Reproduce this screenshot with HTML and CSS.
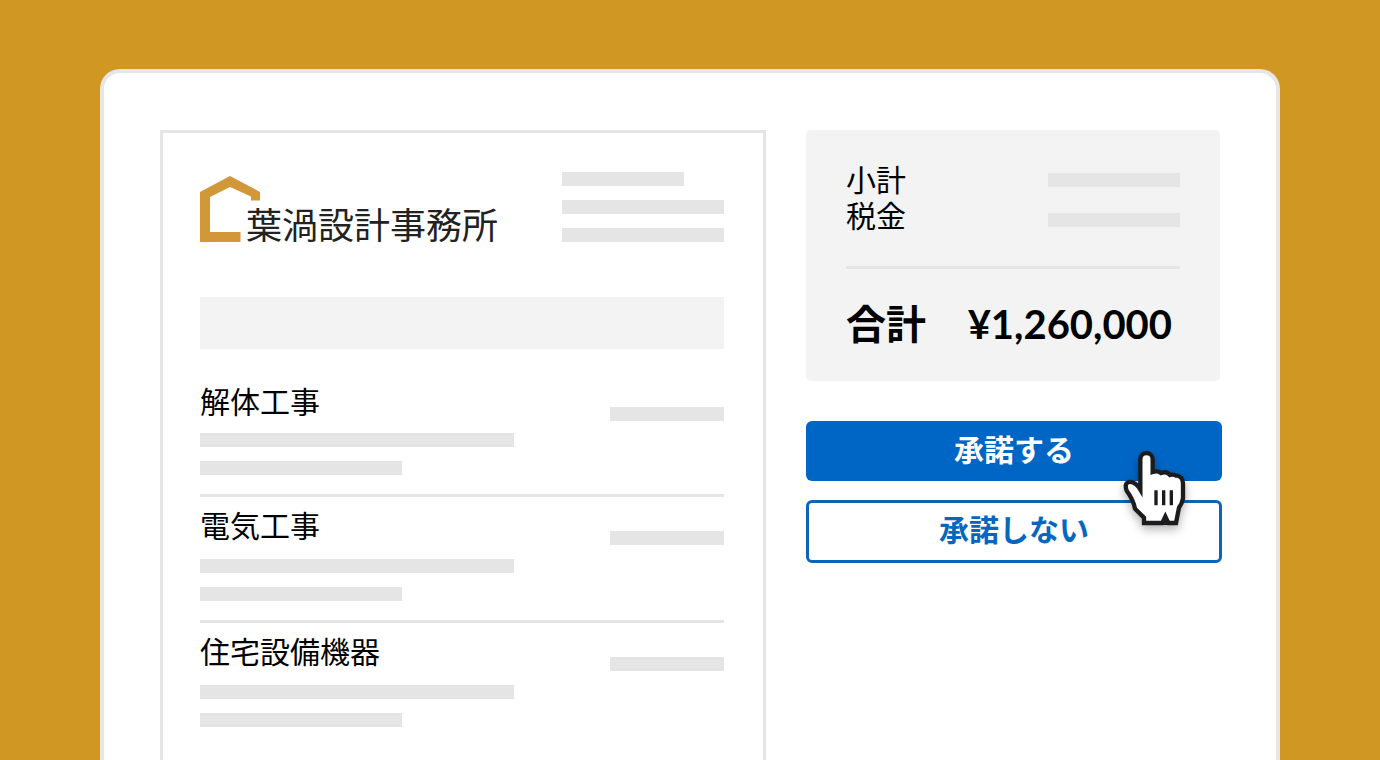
FILE: index.html
```html
<!DOCTYPE html>
<html lang="ja">
<head>
    <meta charset="UTF-8">
    <meta name="viewport" content="width=device-width, initial-scale=1.0">
    <link rel="stylesheet" href="styles.css">
    <title>葉渦設計事務所</title>
</head>
<body>
    <main class="window">
        <section class="document">
            <header class="document-header">
                <div class="logo">
                    <svg class="logo-mark" viewBox="0 0 60 66" aria-hidden="true">
                        <path fill="#d19739" d="M0 16 L30 0 L60 16 V24.500 H51 V20.500 L30 11 L10 21 V56 H40.500 V66 H0 Z"/>
                    </svg>
                    <h1 class="logo-name">葉渦設計事務所</h1>
                </div>
                <div class="address">
                    <div class="bar bar-short"></div>
                    <div class="bar"></div>
                    <div class="bar"></div>
                </div>
            </header>
            <div class="band"></div>
            <ul class="items">
                <li class="item">
                    <div class="item-head">
                        <h2>解体工事</h2>
                        <div class="bar item-price"></div>
                    </div>
                    <div class="bar item-line"></div>
                    <div class="bar item-line item-line-short"></div>
                </li>
                <li class="item">
                    <div class="item-head">
                        <h2>電気工事</h2>
                        <div class="bar item-price"></div>
                    </div>
                    <div class="bar item-line"></div>
                    <div class="bar item-line item-line-short"></div>
                </li>
                <li class="item">
                    <div class="item-head">
                        <h2>住宅設備機器</h2>
                        <div class="bar item-price"></div>
                    </div>
                    <div class="bar item-line"></div>
                    <div class="bar item-line item-line-short"></div>
                </li>
            </ul>
        </section>
        <aside class="sidebar">
            <div class="summary">
                <div class="summary-rows">
                    <div class="summary-labels">
                        <div>小計</div>
                        <div>税金</div>
                    </div>
                    <div class="summary-values">
                        <div class="bar"></div>
                        <div class="bar"></div>
                    </div>
                </div>
                <div class="total">
                    <span class="total-label">合計</span>
                    <span class="total-value">¥1,260,000</span>
                </div>
            </div>
            <div class="actions">
                <button type="button" class="button button-accept">承諾する</button>
                <button type="button" class="button button-decline">承諾しない</button>
                <svg class="cursor" viewBox="60 110 210 249" aria-hidden="true">
                    <path class="cursor-hand" d="M121 238 V147 A18.500 18.500 0 0 1 158 147 V185 Q173 180 183 188 Q200 181 210 194 Q222 191 228 196 Q248 196 249 220 V264 Q246 280 237 292 L228 338 H205 L196 319 L187 338 H132 V322 L105 295 Q100 268 80 241 Q72 219 87 215 Q106 213 121 238 Z"/>
                    <path class="cursor-notch" d="M196 310 L209 344 H183 Z"/>
                    <path class="cursor-lines" d="M168 240 V285 M191 240 V285 M214 240 V285"/>
                </svg>
            </div>
        </aside>
    </main>
</body>
</html>
```
FILE: styles.css
```css
* {
    box-sizing: border-box;
}

body {
    font-family: "Noto Sans CJK JP", sans-serif;
    display: flex;
    height: 100vh;
    margin: 0;
    padding: 69px 100px 0;
    overflow: hidden;
    background-color: #d19723;
    color: #000;
}

h1, h2, ul {
    margin: 0;
    padding: 0;
    font-weight: 400;
    list-style: none;
}

.window {
    flex: 1;
    display: grid;
    grid-template-columns: 606fr 416fr;
    gap: 40px;
    padding: 57px 54px 0 56px;
    border: 4px solid #e6e6e6;
    border-bottom: none;
    border-radius: 20px 20px 0 0;
    background-color: #fff;
}

/* grey placeholder line */
.bar {
    height: 14px;
    background-color: #e5e5e5;
}

/* Estimate */
.document {
    min-height: 0;
    padding: 39px 39px 0 37px;
    border: 3px solid #e5e5e5;
    border-bottom: none;
}

.document-header {
    display: flex;
    justify-content: space-between;
}

.logo {
    display: flex;
    align-items: flex-start;
    padding-top: 4px;
}

.logo-mark {
    width: 60px;
    height: 66px;
}

.logo-name {
    margin: 21px 0 0 -14px;
    font-size: 36px;
    line-height: 52px;
    color: #222;
    white-space: nowrap;
}

.address {
    display: flex;
    flex-direction: column;
    gap: 14px;
    width: 162px;
}

.bar-short {
    width: 75%;
}

.band {
    height: 52px;
    margin-top: 48px;
    background-color: #f3f3f3;
}

.item {
    padding: 5px 0 19px;
    border-bottom: 3px solid #e5e5e5;
}

.item:first-child {
    padding-top: 29px;
}

.item:last-child {
    border-bottom: none;
}

.item-head {
    display: flex;
    justify-content: space-between;
    align-items: flex-end;
    margin-bottom: 11px;
}

.item + .item .item-head {
    margin-bottom: 13px;
}

.item h2 {
    font-size: 30px;
    line-height: 44px;
}

.item-price {
    width: 114px;
    margin-bottom: 1px;
}

.item-line {
    width: 60%;
}

.item-line-short {
    width: 202px;
    margin-top: 14px;
}

/* Totals */
.summary {
    margin-right: 2px;
    padding: 30px 40px;
    border-radius: 5px;
    background-color: #f3f3f3;
}

.summary-rows {
    display: flex;
    justify-content: space-between;
    padding-bottom: 34px;
    border-bottom: 3px solid #e5e5e5;
    font-size: 30px;
    line-height: 36px;
}

.summary-values {
    display: flex;
    flex-direction: column;
    gap: 26px;
    width: 132px;
    padding-top: 13px;
}

.total {
    display: flex;
    justify-content: space-between;
    align-items: baseline;
    height: 56px;
    margin-top: 26px;
    padding-right: 8px;
    font-size: 40px;
    line-height: 54px;
    font-weight: 700;
}

.total-value {
    font-family: Lato, sans-serif;
}

/* Buttons */
.actions {
    position: relative;
    display: flex;
    flex-direction: column;
    gap: 19px;
    margin-top: 40px;
}

.button {
    padding: 0 0 6px;
    border: none;
    border-radius: 6px;
    font-family: inherit;
    font-size: 30px;
    font-weight: 700;
    line-height: 54px;
    cursor: pointer;
}

.button-accept {
    background-color: #0066c5;
    color: #fff;
}

.button-decline {
    border: 3px solid #0c66b8;
    background-color: #fff;
    color: #0767bf;
    line-height: 51px;
}

.cursor {
    position: absolute;
    top: 26px;
    right: 32px;
    width: 70px;
    height: 83px;
    overflow: visible;
    filter: drop-shadow(0 4px 5px rgba(0, 0, 0, 0.3));
    pointer-events: none;
}

.cursor-hand {
    fill: #fff;
    stroke: #1c1c1e;
    stroke-width: 13;
}

.cursor-notch {
    fill: #1c1c1e;
}

.cursor-lines {
    fill: none;
    stroke: #1c1c1e;
    stroke-width: 10;
}
```
